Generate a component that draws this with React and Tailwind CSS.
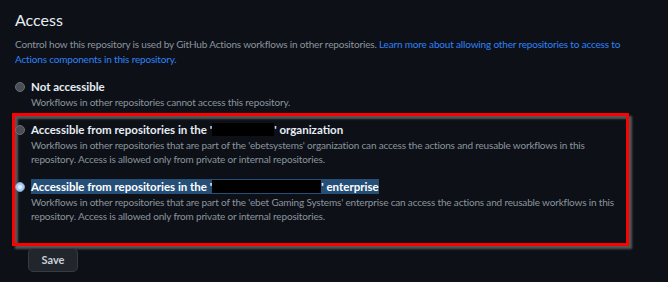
import React from 'react';

const Radio = ({ checked }) =>
  checked ? (
    <span className="mt-[3px] flex h-[10px] w-[10px] shrink-0 items-center justify-center rounded-full border border-[#7f9cc4] bg-[#a9ccf7]">
      <span className="h-[4px] w-[4px] rounded-full bg-[#e3efff]" />
    </span>
  ) : (
    <span className="mt-[3px] h-[10px] w-[10px] shrink-0 rounded-full border border-[#6a6f76] bg-[#4a4e54]" />
  );

const Redacted = ({ w }) => (
  <span className={`inline-block h-[13px] align-[-2px] bg-black ${w}`} />
);

const Option = ({ checked, label, children, className = '' }) => (
  <div className={`flex gap-[6px] ${className}`}>
    <Radio checked={checked} />
    <div className="flex flex-col">
      <div className="text-[11.5px] font-bold leading-[16px] text-[#e6edf3]">{label}</div>
      <p className="text-[10px] leading-[14px] tracking-[-0.17px] text-[#8b949e]">{children}</p>
    </div>
  </div>
);

export default function App() {
  return (
    <div className="min-h-screen bg-[#0d1117] pl-[15px] pr-[42px] pt-[8px] font-['Lato',sans-serif]">
      <h2 className="text-[16px] font-normal leading-[24px] text-[#e6edf3]">Access</h2>
      <p className="mt-[5px] text-[10px] leading-[15px] tracking-[-0.17px] text-[#8b949e]">
        Control how this repository is used by GitHub Actions workflows in other repositories.{' '}
        <a className="text-[#2f81f7]">
          Learn more about allowing other repositories to access to Actions components in this repository.
        </a>
      </p>

      <Option className="mt-[12px]" label="Not accessible">
        Workflows in other repositories cannot access this repository.
      </Option>

      <div className="-mx-[3px] mt-[4px] border-[3px] border-[#ff0000] pb-[20px] pt-[6px] shadow-[3px_3px_2px_#555,inset_3px_3px_2px_#555]">
        <Option
          label={
            <span>
              Accessible from repositories in the '<Redacted w="w-[62px]" />' organization
            </span>
          }
        >
          Workflows in other repositories that are part of the 'ebetsystems' organization can access the actions and
          reusable workflows in this repository. Access is allowed only from private or internal repositories.
        </Option>
        <Option
          checked
          className="mt-[13px]"
          label={
            <span className="bg-[#264f78] py-[1px] text-white">
              Accessible from repositories in the '<Redacted w="w-[109px]" />' enterprise
            </span>
          }
        >
          Workflows in other repositories that are part of the 'ebet Gaming Systems' enterprise can access the actions
          and reusable workflows in this repository. Access is allowed only from private or internal repositories.
        </Option>
      </div>

      <button className="relative z-10 ml-[13px] -mt-[9px] h-[24px] w-[50px] rounded-[5px] border border-[#363b42] bg-[#21262d] text-[11px] font-bold text-[#c9d1d9]">
        Save
      </button>
    </div>
  );
}
